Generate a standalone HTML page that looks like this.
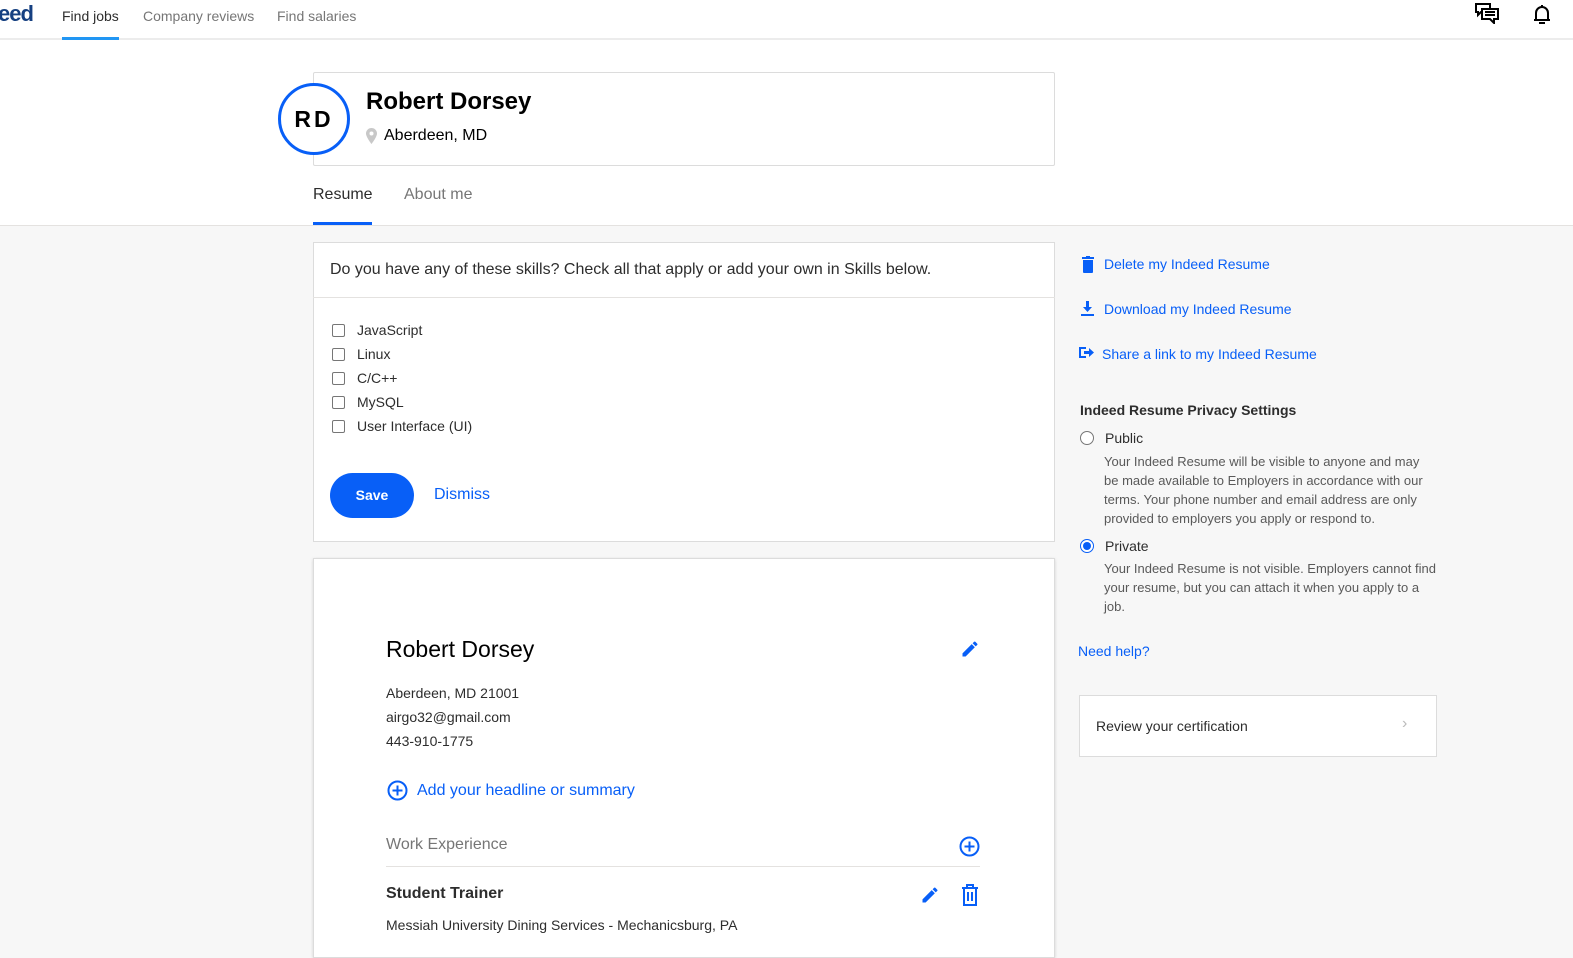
<!DOCTYPE html>
<html><head><style>
*{margin:0;padding:0;box-sizing:border-box}
body{width:1573px;height:939px;overflow:hidden;background:#f7f7f7;font-family:"Liberation Sans",Arial,sans-serif;color:#2d2d2d;position:relative}
.a{position:absolute}
.top{position:absolute;left:0;top:0;width:1573px;height:226px;background:#fff;border-bottom:1px solid #e4e2e0}
.nav{position:absolute;left:0;top:0;width:1573px;height:40px;border-bottom:2px solid #ececec}
.card{position:absolute;background:#fff;border:1px solid #dcdcdc}
.blue{color:#085ff7}
.cb{position:absolute;left:332px;width:13px;height:13px;border:1px solid #767676;border-radius:2px;background:#fff}
.sk{position:absolute;left:357px;font-size:14px;color:#2d2d2d}
</style></head><body>
<div class="top"></div>
<div class="nav"></div>
<div class="a" style="left:-2px;top:1px;font-size:22px;font-weight:bold;color:#164081;letter-spacing:-1px">eed</div>
<div class="a" style="left:62px;top:8px;font-size:14px;color:#2d2d2d">Find jobs</div>
<div class="a" style="left:62px;top:37px;width:57px;height:3px;background:#2196f3"></div>
<div class="a" style="left:143px;top:8px;font-size:14px;color:#767676">Company reviews</div>
<div class="a" style="left:277px;top:8px;font-size:14px;color:#767676">Find salaries</div>
<svg class="a" style="left:1474px;top:2px" width="26" height="22" viewBox="0 0 26 22" fill="none" stroke="#000" stroke-width="2"><path d="M2 2h14v8H7l-3 3V10H2z"/><path d="M8 7h16v10h-4v4l-4-4H8z" fill="#fff"/><path d="M11 10h10M11 13h10"/></svg>
<svg class="a" style="left:1531px;top:3px" width="22" height="22" viewBox="0 0 22 22" fill="none" stroke="#000" stroke-width="2"><path d="M11 2v2M5 17V10a6 6 0 0112 0v7zM3 17h16M8 20h6"/></svg>

<div class="card" style="left:313px;top:72px;width:742px;height:94px;border-radius:2px"></div>
<div class="a" style="left:278px;top:83px;width:72px;height:72px;border:3px solid #085ff7;border-radius:50%;background:#fff;text-align:center;line-height:66px;font-size:23px;font-weight:bold;color:#000;letter-spacing:3px">RD</div>
<div class="a" style="left:366px;top:88px;font-size:24px;font-weight:bold;color:#000">Robert Dorsey</div>
<svg class="a" style="left:366px;top:128px" width="11" height="16" viewBox="0 0 11 16"><path d="M5.5 0A5.5 5.5 0 000 5.5C0 9 5.5 16 5.5 16S11 9 11 5.5A5.5 5.5 0 005.5 0z" fill="#c8c8c8"/><circle cx="5.5" cy="5.5" r="2" fill="#fff"/></svg>
<div class="a" style="left:384px;top:127px;font-size:16px;color:#000">Aberdeen, MD</div>
<div class="a" style="left:313px;top:186px;font-size:16px;color:#2d2d2d">Resume</div>
<div class="a" style="left:313px;top:222px;width:59px;height:3px;background:#085ff7"></div>
<div class="a" style="left:404px;top:186px;font-size:16px;color:#767676">About me</div>

<div class="card" style="left:313px;top:242px;width:742px;height:300px"></div>
<div class="a" style="left:313px;top:297px;width:742px;height:1px;background:#e4e2e0"></div>
<div class="a" style="left:330px;top:261px;font-size:16px;color:#2d2d2d">Do you have any of these skills? Check all that apply or add your own in Skills below.</div>
<div class="cb" style="top:324px"></div><div class="sk" style="top:322px">JavaScript</div>
<div class="cb" style="top:348px"></div><div class="sk" style="top:346px">Linux</div>
<div class="cb" style="top:372px"></div><div class="sk" style="top:370px">C/C++</div>
<div class="cb" style="top:396px"></div><div class="sk" style="top:394px">MySQL</div>
<div class="cb" style="top:420px"></div><div class="sk" style="top:418px">User Interface (UI)</div>
<div class="a" style="left:330px;top:473px;width:84px;height:45px;border-radius:23px;background:#085ff7;color:#fff;font-size:14px;font-weight:bold;text-align:center;line-height:45px">Save</div>
<div class="a blue" style="left:434px;top:486px;font-size:16px">Dismiss</div>

<div class="card" style="left:313px;top:558px;width:742px;height:400px;box-shadow:0 1px 3px rgba(0,0,0,.15)"></div>
<div class="a" style="left:386px;top:636px;font-size:23px;color:#000">Robert Dorsey</div>
<svg class="a" style="left:960px;top:639px" width="20" height="20" viewBox="0 0 24 24" fill="#085ff7"><path d="M3 17.25V21h3.75L17.81 9.94l-3.75-3.75zM20.71 7.04a1 1 0 000-1.41l-2.34-2.34a1 1 0 00-1.41 0l-1.83 1.83 3.75 3.75z"/></svg>
<div class="a" style="left:386px;top:685px;font-size:14px;color:#2d2d2d">Aberdeen, MD 21001</div>
<div class="a" style="left:386px;top:709px;font-size:14px;color:#2d2d2d">airgo32@gmail.com</div>
<div class="a" style="left:386px;top:733px;font-size:14px;color:#2d2d2d">443-910-1775</div>
<svg class="a" style="left:387px;top:780px" width="21" height="21" viewBox="0 0 21 21" fill="none" stroke="#085ff7" stroke-width="2"><circle cx="10.5" cy="10.5" r="9"/><path d="M10.5 5.5v10M5.5 10.5h10"/></svg>
<div class="a blue" style="left:417px;top:782px;font-size:16px">Add your headline or summary</div>
<div class="a" style="left:386px;top:836px;font-size:16px;color:#767676">Work Experience</div>
<svg class="a" style="left:959px;top:836px" width="21" height="21" viewBox="0 0 21 21" fill="none" stroke="#085ff7" stroke-width="2"><circle cx="10.5" cy="10.5" r="9"/><path d="M10.5 5.5v10M5.5 10.5h10"/></svg>
<div class="a" style="left:386px;top:866px;width:594px;height:1px;background:#e4e2e0"></div>
<div class="a" style="left:386px;top:885px;font-size:16px;font-weight:bold;color:#2d2d2d">Student Trainer</div>
<svg class="a" style="left:920px;top:885px" width="20" height="20" viewBox="0 0 24 24" fill="#085ff7"><path d="M3 17.25V21h3.75L17.81 9.94l-3.75-3.75zM20.71 7.04a1 1 0 000-1.41l-2.34-2.34a1 1 0 00-1.41 0l-1.83 1.83 3.75 3.75z"/></svg>
<svg class="a" style="left:961px;top:884px" width="18" height="22" viewBox="0 0 18 22" fill="none" stroke="#085ff7" stroke-width="2"><path d="M1 4h16M6 4V1h6v3M3 4v17h12V4M7 8v9M11 8v9"/></svg>
<div class="a" style="left:386px;top:917px;font-size:14px;color:#2d2d2d">Messiah University Dining Services - Mechanicsburg, PA</div>

<svg class="a" style="left:1082px;top:256px" width="12" height="17" viewBox="0 0 12 17" fill="#085ff7"><rect x="0" y="1" width="12" height="2"/><rect x="4" y="0" width="4" height="2"/><path d="M1 4h10v12a1 1 0 01-1 1H2a1 1 0 01-1-1z"/></svg>
<div class="a blue" style="left:1104px;top:256px;font-size:14px">Delete my Indeed Resume</div>
<svg class="a" style="left:1081px;top:301px" width="13" height="15" viewBox="0 0 13 15" fill="#085ff7"><path d="M5 0h3v6h3l-4.5 5L2 6h3z"/><rect x="0" y="13" width="13" height="2"/></svg>
<div class="a blue" style="left:1104px;top:301px;font-size:14px">Download my Indeed Resume</div>
<svg class="a" style="left:1079px;top:346px" width="15" height="13" viewBox="0 0 15 13" fill="#085ff7"><path d="M0 1h7v2H2v7h5v2H0z"/><path d="M5 5h5V2l5 4.5L10 11V8H5z"/></svg>
<div class="a blue" style="left:1102px;top:346px;font-size:14px">Share a link to my Indeed Resume</div>
<div class="a" style="left:1080px;top:402px;font-size:14px;font-weight:bold;color:#2d2d2d">Indeed Resume Privacy Settings</div>
<div class="a" style="left:1080px;top:431px;width:14px;height:14px;border:1px solid #767676;border-radius:50%;background:#fff"></div>
<div class="a" style="left:1105px;top:430px;font-size:14px">Public</div>
<div class="a" style="left:1104px;top:452px;width:330px;font-size:13px;line-height:19px;color:#595959">Your Indeed Resume will be visible to anyone and may be made available to Employers in accordance with our terms. Your phone number and email address are only provided to employers you apply or respond to.</div>
<div class="a" style="left:1080px;top:539px;width:14px;height:14px;border:1px solid #085ff7;border-radius:50%;background:#fff"><div style="margin:2px;width:8px;height:8px;border-radius:50%;background:#085ff7"></div></div>
<div class="a" style="left:1105px;top:538px;font-size:14px">Private</div>
<div class="a" style="left:1104px;top:559px;width:335px;font-size:13px;line-height:19px;color:#595959">Your Indeed Resume is not visible. Employers cannot find your resume, but you can attach it when you apply to a job.</div>
<div class="a blue" style="left:1078px;top:643px;font-size:14px">Need help?</div>
<div class="card" style="left:1079px;top:695px;width:358px;height:62px"></div>
<div class="a" style="left:1096px;top:718px;font-size:14px;color:#2d2d2d">Review your certification</div>
<div class="a" style="left:1402px;top:715px;font-size:16px;color:#bbb">›</div>
</body></html>
